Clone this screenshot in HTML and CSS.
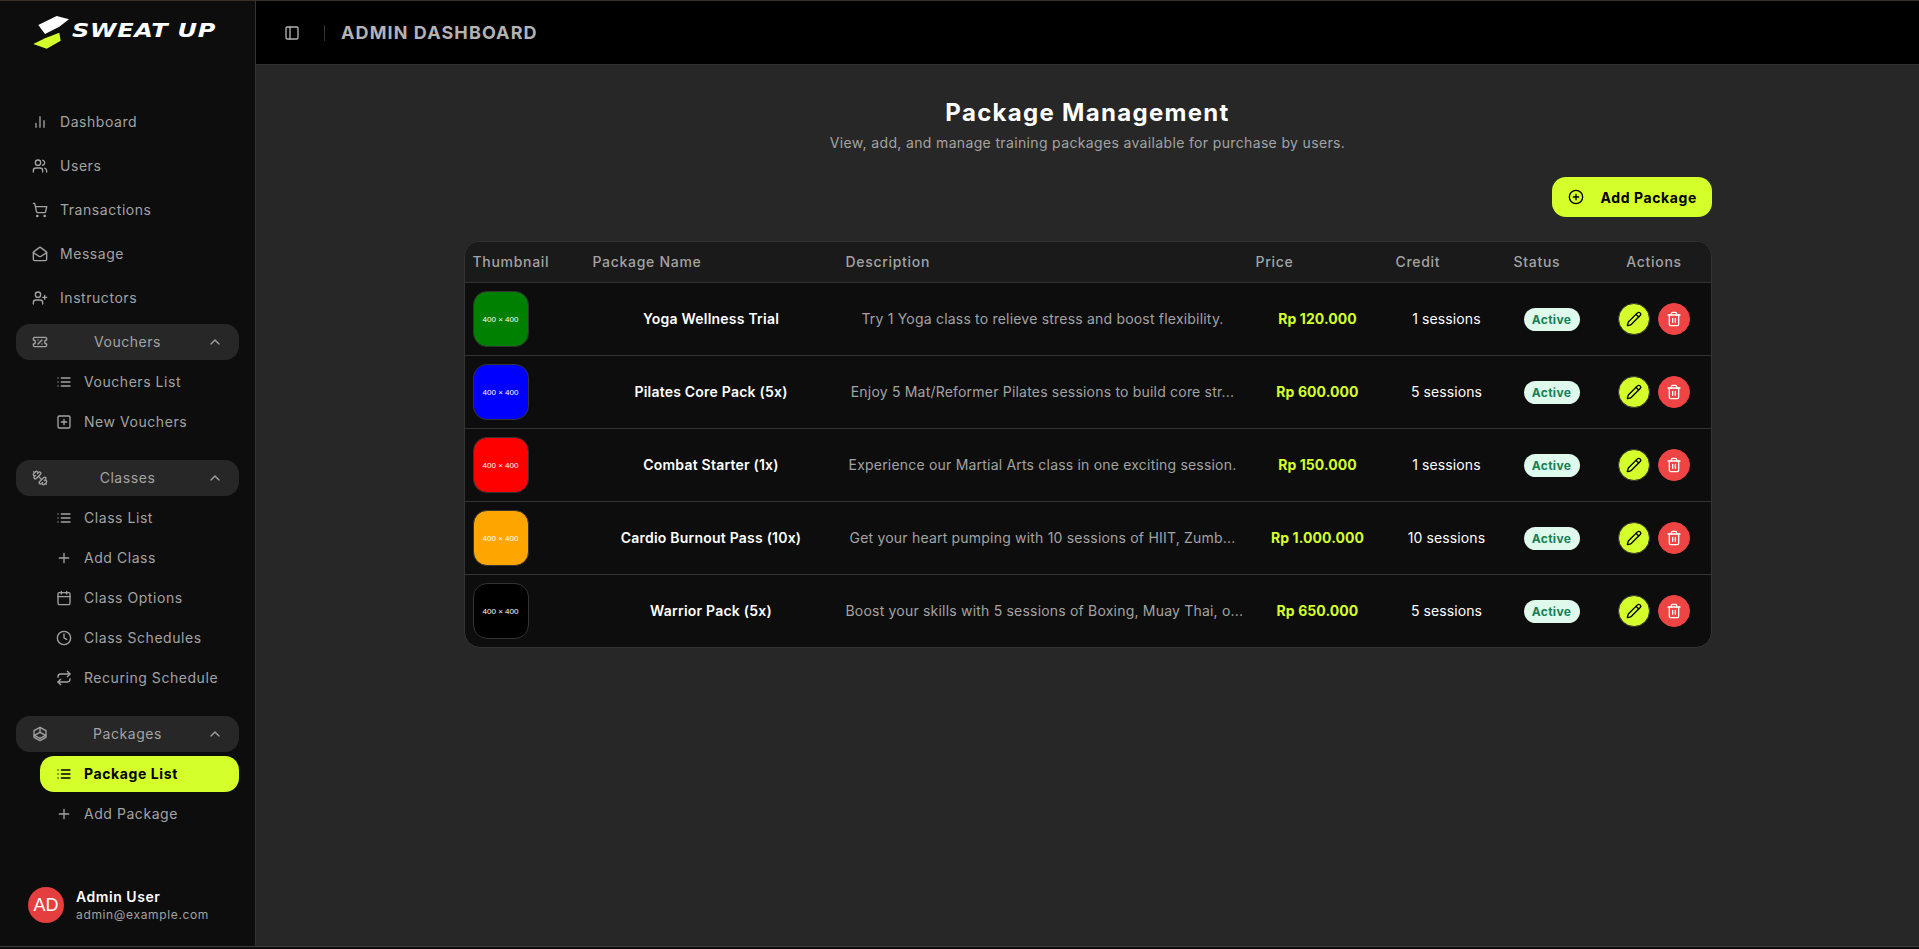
FILE: index.html
```html
<!DOCTYPE html>
<html lang="en">
<head>
    <meta charset="UTF-8">
    <meta name="viewport" content="width=device-width, initial-scale=1.0">
    <title>Sweat Up Admin</title>
    <link rel="stylesheet" href="styles.css">
</head>
<body>
    <svg class="defs" aria-hidden="true">
        <symbol id="i-chart" viewBox="0 0 24 24"><path d="M18 20V10M12 20V4M6 20v-6"/></symbol>
        <symbol id="i-users" viewBox="0 0 24 24"><path d="M16 21v-2a4 4 0 0 0-4-4H6a4 4 0 0 0-4 4v2"/><circle cx="9" cy="7" r="4"/><path d="M22 21v-2a4 4 0 0 0-3-3.87"/><path d="M16 3.13a4 4 0 0 1 0 7.75"/></symbol>
        <symbol id="i-cart" viewBox="0 0 24 24"><circle cx="8" cy="21" r="1"/><circle cx="19" cy="21" r="1"/><path d="M2.05 2.05h2l2.66 12.42a2 2 0 0 0 2 1.58h9.78a2 2 0 0 0 1.95-1.57l1.65-7.43H5.12"/></symbol>
        <symbol id="i-mail" viewBox="0 0 24 24"><path d="M21.2 8.4c.5.38.8.97.8 1.6v10a2 2 0 0 1-2 2H4a2 2 0 0 1-2-2V10a2 2 0 0 1 .8-1.6l8-6a2 2 0 0 1 2.4 0l8 6Z"/><path d="m22 10-8.97 5.7a1.94 1.94 0 0 1-2.06 0L2 10"/></symbol>
        <symbol id="i-userplus" viewBox="0 0 24 24"><path d="M16 21v-2a4 4 0 0 0-4-4H6a4 4 0 0 0-4 4v2"/><circle cx="9" cy="7" r="4"/><path d="M19 8v6M22 11h-6"/></symbol>
        <symbol id="i-ticket" viewBox="0 0 24 24"><path d="M2 9a3 3 0 1 1 0 6v2a2 2 0 0 0 2 2h16a2 2 0 0 0 2-2v-2a3 3 0 1 1 0-6V7a2 2 0 0 0-2-2H4a2 2 0 0 0-2 2Z"/><path d="M9 9h.01"/><path d="m15 9-6 6"/><path d="M15 15h.01"/></symbol>
        <symbol id="i-dumbbell" viewBox="0 0 24 24"><path d="M14.4 14.4 9.6 9.6"/><path d="M18.657 21.485a2 2 0 1 1-2.829-2.828l-1.767 1.768a2 2 0 1 1-2.829-2.829l6.364-6.364a2 2 0 1 1 2.829 2.829l-1.768 1.767a2 2 0 1 1 2.828 2.829z"/><path d="m21.5 21.5-1.4-1.4"/><path d="M3.9 3.9 2.5 2.5"/><path d="M6.404 12.768a2 2 0 1 1-2.829-2.829l1.768-1.767a2 2 0 1 1-2.828-2.829l2.828-2.828a2 2 0 1 1 2.829 2.828l1.767-1.768a2 2 0 1 1 2.829 2.829z"/></symbol>
        <symbol id="i-package" viewBox="0 0 24 24"><path d="M12 2 21 7v10l-9 5-9-5V7Z"/><path d="M12 2v7.500"/><path d="M3.500 14 12 9.500l8.500 4.500-8.500 4.500Z"/></symbol>
        <symbol id="i-chevron" viewBox="0 0 24 24"><path d="m18 15-6-6-6 6"/></symbol>
        <symbol id="i-list" viewBox="0 0 24 24"><path d="M3 12h.01M3 18h.01M3 6h.01M8 12h13M8 18h13M8 6h13"/></symbol>
        <symbol id="i-squareplus" viewBox="0 0 24 24"><rect x="3" y="3" width="18" height="18" rx="2"/><path d="M8 12h8M12 8v8"/></symbol>
        <symbol id="i-plus" viewBox="0 0 24 24"><path d="M5 12h14M12 5v14"/></symbol>
        <symbol id="i-calendar" viewBox="0 0 24 24"><path d="M8 2v4M16 2v4"/><rect x="3" y="4" width="18" height="18" rx="2"/><path d="M3 10h18"/></symbol>
        <symbol id="i-clock" viewBox="0 0 24 24"><circle cx="12" cy="12" r="10"/><path d="M12 6v6l4 2"/></symbol>
        <symbol id="i-repeat" viewBox="0 0 24 24"><path d="m17 2 4 4-4 4"/><path d="M3 11v-1a4 4 0 0 1 4-4h14"/><path d="m7 22-4-4 4-4"/><path d="M21 13v1a4 4 0 0 1-4 4H3"/></symbol>
        <symbol id="i-panel" viewBox="0 0 24 24"><rect x="3" y="3" width="18" height="18" rx="2"/><path d="M9 3v18"/></symbol>
        <symbol id="i-circleplus" viewBox="0 0 24 24"><circle cx="12" cy="12" r="10"/><path d="M8 12h8M12 8v8"/></symbol>
        <symbol id="i-pencil" viewBox="0 0 24 24"><path d="M21.174 6.812a1 1 0 0 0-3.986-3.987L3.842 16.174a2 2 0 0 0-.5.83l-1.321 4.352a.5.5 0 0 0 .623.622l4.353-1.32a2 2 0 0 0 .83-.497z"/><path d="m15 5 4 4"/></symbol>
        <symbol id="i-trash" viewBox="0 0 24 24"><path d="M3 6h18"/><path d="M19 6v14c0 1-1 2-2 2H7c-1 0-2-1-2-2V6"/><path d="M8 6V4c0-1 1-2 2-2h4c1 0 2 1 2 2v2"/><path d="M10 11v6M14 11v6"/></symbol>
    </svg>

    <div class="app">
        <aside class="sidebar">
            <div class="brand">
                <svg class="brand-mark" viewBox="0 0 40 35" aria-hidden="true">
                    <polygon class="mark-white" points="5.300,9 23.700,0 36,3.300 26.300,10.700 12,18"/>
                    <polygon class="mark-lime" points="0.300,28 12,22.300 26.300,16.700 27.700,24.700 13.700,32.700"/>
                </svg>
                <span class="brand-name">SWEAT UP</span>
            </div>
            <nav class="nav">
                <a class="nav-item"><svg class="icon"><use href="#i-chart"/></svg>Dashboard</a>
                <a class="nav-item"><svg class="icon"><use href="#i-users"/></svg>Users</a>
                <a class="nav-item"><svg class="icon"><use href="#i-cart"/></svg>Transactions</a>
                <a class="nav-item"><svg class="icon"><use href="#i-mail"/></svg>Message</a>
                <a class="nav-item"><svg class="icon"><use href="#i-userplus"/></svg>Instructors</a>

                <div class="nav-group"><svg class="icon"><use href="#i-ticket"/></svg><span>Vouchers</span><svg class="icon"><use href="#i-chevron"/></svg></div>
                <div class="sub-list">
                    <a class="sub-item"><svg class="icon"><use href="#i-list"/></svg>Vouchers List</a>
                    <a class="sub-item"><svg class="icon"><use href="#i-squareplus"/></svg>New Vouchers</a>
                </div>

                <div class="nav-group"><svg class="icon"><use href="#i-dumbbell"/></svg><span>Classes</span><svg class="icon"><use href="#i-chevron"/></svg></div>
                <div class="sub-list">
                    <a class="sub-item"><svg class="icon"><use href="#i-list"/></svg>Class List</a>
                    <a class="sub-item"><svg class="icon"><use href="#i-plus"/></svg>Add Class</a>
                    <a class="sub-item"><svg class="icon"><use href="#i-calendar"/></svg>Class Options</a>
                    <a class="sub-item"><svg class="icon"><use href="#i-clock"/></svg>Class Schedules</a>
                    <a class="sub-item"><svg class="icon"><use href="#i-repeat"/></svg>Recuring Schedule</a>
                </div>

                <div class="nav-group"><svg class="icon"><use href="#i-package"/></svg><span>Packages</span><svg class="icon"><use href="#i-chevron"/></svg></div>
                <div class="sub-list">
                    <a class="sub-item active"><svg class="icon"><use href="#i-list"/></svg>Package List</a>
                    <a class="sub-item"><svg class="icon"><use href="#i-plus"/></svg>Add Package</a>
                </div>
            </nav>
            <div class="user">
                <div class="avatar">AD</div>
                <div>
                    <div class="user-name">Admin User</div>
                    <div class="user-mail">admin@example.com</div>
                </div>
            </div>
        </aside>

        <div class="content">
            <header class="topbar">
                <svg class="icon panel-icon"><use href="#i-panel"/></svg>
                <span class="topbar-sep"></span>
                <span class="topbar-title">ADMIN DASHBOARD</span>
            </header>
            <main class="page">
                <h1>Package Management</h1>
                <p class="subtitle">View, add, and manage training packages available for purchase by users.</p>
                <div class="toolbar">
                    <button type="button" class="add-btn"><svg class="icon"><use href="#i-circleplus"/></svg>Add Package</button>
                </div>
                <div class="table-wrap">
                    <table>
                        <colgroup>
                            <col class="col-thumb"><col class="col-name"><col class="col-desc"><col class="col-price"><col class="col-credit"><col class="col-status"><col class="col-actions">
                        </colgroup>
                        <thead>
                            <tr>
                                <th>Thumbnail</th>
                                <th>Package Name</th>
                                <th>Description</th>
                                <th>Price</th>
                                <th>Credit</th>
                                <th>Status</th>
                                <th class="center">Actions</th>
                            </tr>
                        </thead>
                        <tbody>
                            <tr>
                                <td><div class="thumb thumb-green">400 × 400</div></td>
                                <td class="name">Yoga Wellness Trial</td>
                                <td class="desc">Try 1 Yoga class to relieve stress and boost flexibility.</td>
                                <td class="price">Rp 120.000</td>
                                <td class="credit">1 sessions</td>
                                <td class="status"><span class="badge">Active</span></td>
                                <td><div class="actions"><button type="button" class="round edit"><svg class="icon"><use href="#i-pencil"/></svg></button><button type="button" class="round del"><svg class="icon"><use href="#i-trash"/></svg></button></div></td>
                            </tr>
                            <tr>
                                <td><div class="thumb thumb-blue">400 × 400</div></td>
                                <td class="name">Pilates Core Pack (5x)</td>
                                <td class="desc">Enjoy 5 Mat/Reformer Pilates sessions to build core str...</td>
                                <td class="price">Rp 600.000</td>
                                <td class="credit">5 sessions</td>
                                <td class="status"><span class="badge">Active</span></td>
                                <td><div class="actions"><button type="button" class="round edit"><svg class="icon"><use href="#i-pencil"/></svg></button><button type="button" class="round del"><svg class="icon"><use href="#i-trash"/></svg></button></div></td>
                            </tr>
                            <tr>
                                <td><div class="thumb thumb-red">400 × 400</div></td>
                                <td class="name">Combat Starter (1x)</td>
                                <td class="desc">Experience our Martial Arts class in one exciting session.</td>
                                <td class="price">Rp 150.000</td>
                                <td class="credit">1 sessions</td>
                                <td class="status"><span class="badge">Active</span></td>
                                <td><div class="actions"><button type="button" class="round edit"><svg class="icon"><use href="#i-pencil"/></svg></button><button type="button" class="round del"><svg class="icon"><use href="#i-trash"/></svg></button></div></td>
                            </tr>
                            <tr>
                                <td><div class="thumb thumb-orange">400 × 400</div></td>
                                <td class="name">Cardio Burnout Pass (10x)</td>
                                <td class="desc">Get your heart pumping with 10 sessions of HIIT, Zumb...</td>
                                <td class="price">Rp 1.000.000</td>
                                <td class="credit">10 sessions</td>
                                <td class="status"><span class="badge">Active</span></td>
                                <td><div class="actions"><button type="button" class="round edit"><svg class="icon"><use href="#i-pencil"/></svg></button><button type="button" class="round del"><svg class="icon"><use href="#i-trash"/></svg></button></div></td>
                            </tr>
                            <tr>
                                <td><div class="thumb thumb-black">400 × 400</div></td>
                                <td class="name">Warrior Pack (5x)</td>
                                <td class="desc">Boost your skills with 5 sessions of Boxing, Muay Thai, o...</td>
                                <td class="price">Rp 650.000</td>
                                <td class="credit">5 sessions</td>
                                <td class="status"><span class="badge">Active</span></td>
                                <td><div class="actions"><button type="button" class="round edit"><svg class="icon"><use href="#i-pencil"/></svg></button><button type="button" class="round del"><svg class="icon"><use href="#i-trash"/></svg></button></div></td>
                            </tr>
                        </tbody>
                    </table>
                </div>
            </main>
        </div>
    </div>
</body>
</html>
```

FILE: styles.css
```css
* { box-sizing: border-box; }
body { margin: 0; height: 949px; overflow: hidden; background-color: #0d0d0d; color: #fff; font-family: Inter, "Liberation Sans", sans-serif; font-size: 14px; letter-spacing: 0.55px; }
.defs { display: none; }
.icon { width: 16px; height: 16px; flex: none; fill: none; stroke: currentColor; stroke-width: 2; stroke-linecap: round; stroke-linejoin: round; }

.app { display: flex; height: 947px; border-top: 1px solid #3a2f2b; border-bottom: 1px solid #3d3d3d; }

/* sidebar */
.sidebar { width: 256px; flex: none; display: flex; flex-direction: column; background-color: #0d0d0d; border-right: 1px solid #333; padding-bottom: 23px; }
.brand { height: 103px; display: flex; align-items: flex-start; padding: 15px 0 0 33px; }
.brand-mark { width: 40px; height: 35px; flex: none; }
.mark-white { fill: #fff; }
.mark-lime { fill: #d4ff2a; }
.brand-name { display: inline-block; margin: 2px 0 0 -1px; font-family: "DejaVu Sans", sans-serif; font-weight: 700; font-style: italic; font-size: 20px; letter-spacing: 0.6px; line-height: 24px; color: #fff; white-space: nowrap; transform: scaleX(1.2); transform-origin: left center; }
.nav { padding: 0 16px; display: flex; flex-direction: column; gap: 8px; }
.nav-item { height: 36px; display: flex; align-items: center; gap: 12px; padding: 0 0 2px 16px; color: #a3a3a3; }
.nav-group { height: 36px; display: flex; align-items: center; padding: 0 16px 2px; border-radius: 14px; background-color: #272727; color: #a3a3a3; }
.nav-group span { flex: 1; text-align: center; }
.sub-list { display: flex; flex-direction: column; gap: 4px; margin: -4px 0 12px 24px; }
.sub-list:last-child { margin-bottom: 0; }
.sub-item { height: 36px; display: flex; align-items: center; gap: 12px; padding: 0 0 2px 16px; border-radius: 14px; color: #a3a3a3; }
.nav-item .icon, .nav-group .icon, .sub-item .icon { margin-top: 2px; }
.sub-item.active { background-color: #d4ff2a; color: #000; font-weight: 700; letter-spacing: 0.6px; }
.user { margin-top: auto; display: flex; align-items: center; gap: 12px; padding-left: 28px; }
.avatar { width: 36px; height: 36px; border-radius: 50%; background-color: #e53e3e; display: flex; align-items: center; justify-content: center; font-family: "Liberation Sans", sans-serif; font-size: 18px; letter-spacing: 0; color: #fff; }
.user-name { font-weight: 600; line-height: 20px; color: #fff; }
.user-mail { font-size: 12px; line-height: 16px; letter-spacing: 0.65px; color: #a3a3a3; }

/* top bar */
.content { flex: 1; min-width: 0; display: flex; flex-direction: column; background-color: #272727; }
.topbar { height: 64px; flex: none; display: flex; align-items: center; padding-left: 28px; background-color: #000; border-bottom: 1px solid #333; color: #b3b3b3; }
.topbar-sep { width: 1px; height: 16px; margin: 0 16px 0 24px; background-color: #333; }
.topbar-title { font-size: 18px; font-weight: 700; letter-spacing: 1.1px; }

/* page */
.page { width: 1248px; margin: 0 auto; padding-top: 32px; }
h1 { margin: 0; font-size: 24px; line-height: 32px; font-weight: 700; letter-spacing: 1.3px; text-align: center; color: #fff; }
.subtitle { margin: 4px 0 0; line-height: 20px; letter-spacing: 0.35px; text-align: center; color: #a3a3a3; }
.toolbar { display: flex; justify-content: flex-end; margin-top: 24px; }
.add-btn { height: 40px; width: 160px; display: flex; align-items: center; gap: 17px; padding: 0 0 0 16px; border: 0; border-radius: 14px; background-color: #d4ff2a; color: #000; font: inherit; font-weight: 700; letter-spacing: 0.6px; white-space: nowrap; }

/* table */
.table-wrap { margin-top: 24px; border: 1px solid #333; border-radius: 16px; overflow: hidden; background-color: #0d0d0d; }
table { width: 100%; table-layout: fixed; border-collapse: separate; border-spacing: 0; }
.col-thumb { width: 120px; }
.col-name { width: 253px; }
.col-desc { width: 410px; }
.col-price { width: 140px; }
.col-credit { width: 118px; }
.col-status { width: 92px; }
.col-actions { width: 113px; }
th { height: 41px; padding: 0 8px 1px; text-align: left; font-weight: 500; letter-spacing: 0.7px; color: #a3a3a3; background-color: #1a1a1a; border-bottom: 1px solid #333; }
th.center { text-align: center; }
td { height: 73px; padding: 8px; border-bottom: 1px solid #333; text-align: center; white-space: nowrap; overflow: hidden; }
tbody tr:last-child td { border-bottom: 0; height: 72px; }
.thumb { width: 56px; height: 56px; display: flex; align-items: center; justify-content: center; border: 1px solid #333; border-radius: 14px; font-family: "Liberation Sans", sans-serif; font-size: 8px; letter-spacing: 0; color: #fff; }
.thumb-green { background-color: #008000; }
.thumb-blue { background-color: #0000ff; }
.thumb-red { background-color: #ff0000; }
.thumb-orange { background-color: #ffa500; }
.thumb-black { background-color: #000; }
.name { padding-bottom: 10px; font-weight: 600; letter-spacing: 0.22px; color: #fff; }
.desc { padding-bottom: 10px; letter-spacing: 0.2px; color: #a3a3a3; }
.price { padding-bottom: 10px; font-weight: 700; letter-spacing: 0.08px; color: #d4ff2a; }
.credit { padding-bottom: 10px; font-weight: 400; letter-spacing: 0.1px; color: #fff; }
.badge { display: inline-block; width: 56px; height: 23px; line-height: 23px; border-radius: 12px; background-color: #dff9ec; color: #157f55; font-size: 12px; font-weight: 700; letter-spacing: 0.3px; }
.actions { display: flex; justify-content: center; gap: 8px; }
.round { width: 32px; height: 32px; padding: 0; display: flex; align-items: center; justify-content: center; border-radius: 50%; border: 1px solid #333; }
.edit { background-color: #d4ff2a; color: #000; }
.del { background-color: #ef4444; border-color: #ef4444; color: #fff; }
```
